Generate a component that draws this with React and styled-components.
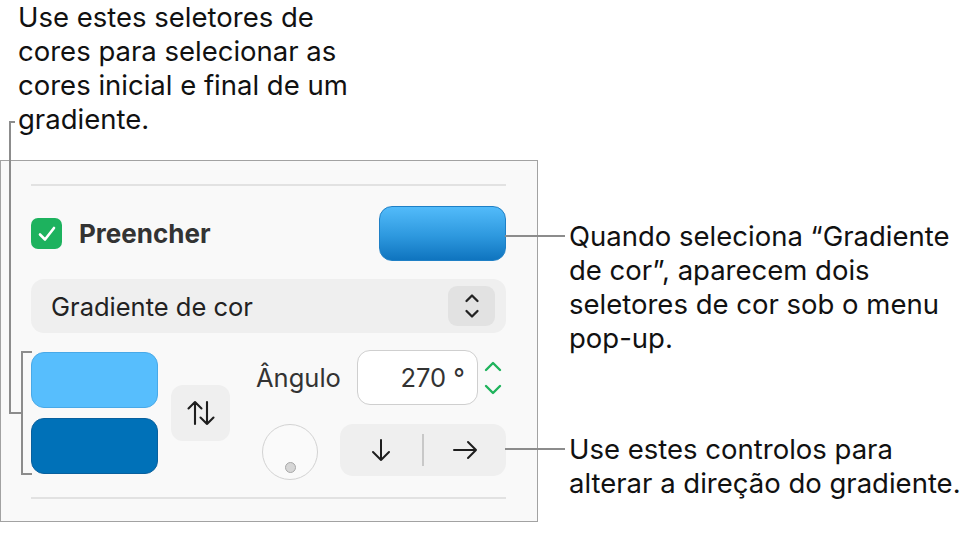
import styled, { createGlobalStyle } from "styled-components";

const GlobalStyle = createGlobalStyle`
  html, body {
    margin: 0;
    background: #ffffff;
  }
  body {
    font-family: Inter, "Noto Sans", "Liberation Sans", sans-serif;
    color: #111;
  }
`;

export default function App() {
  return (
    <>
      <GlobalStyle />
      <Page>
        <LeftCol>
          <Caption>
            Use estes seletores de
            <br />
            cores para selecionar as
            <br />
            cores inicial e final de um
            <br />
            gradiente.
          </Caption>

          <Panel>
            <Rule />

            <FillRow>
              <Check>
                <svg width="20" height="18" viewBox="0 0 20 18">
                  <path d="M3 9.5 L8 14.5 L17 3" fill="none" stroke="#fff" strokeWidth="2.6" strokeLinecap="round" strokeLinejoin="round" />
                </svg>
              </Check>
              <FillLabel>Preencher</FillLabel>
              <FillSwatch />
            </FillRow>

            <Select>
              <SelectText>Gradiente de cor</SelectText>
              <Stepper>
                <svg width="18" height="28" viewBox="0 0 18 28">
                  <path d="M3.5 9 L9 3.5 L14.5 9 M3.5 19 L9 24.5 L14.5 19" fill="none" stroke="#222" strokeWidth="2.3" strokeLinecap="round" strokeLinejoin="round" />
                </svg>
              </Stepper>
            </Select>

            <GradientGrid>
              <WellStack>
                <Well tone="light" />
                <Well tone="dark" />
              </WellStack>

              <SwapButton>
                <svg width="32" height="28" viewBox="0 0 32 28">
                  <path d="M10 25 V3 M3.5 9.5 L10 3 L16.5 9.5 M22 3 V25 M15.5 18.5 L22 25 L28.5 18.5" fill="none" stroke="#1e1e1e" strokeWidth="2.1" strokeLinecap="round" strokeLinejoin="round" />
                </svg>
              </SwapButton>

              <AngleArea>
                <AngleRow>
                  <AngleLabel>Ângulo</AngleLabel>
                  <AngleInput>270 °</AngleInput>
                  <GreenStepper>
                    <svg width="20" height="40" viewBox="0 0 20 40">
                      <path d="M3 12 L10 5 L17 12 M3 28 L10 35 L17 28" fill="none" stroke="#1fb35c" strokeWidth="2.4" strokeLinecap="round" strokeLinejoin="round" />
                    </svg>
                  </GreenStepper>
                </AngleRow>

                <DirRow>
                  <Dial>
                    <DialDot />
                  </Dial>
                  <DirGroup>
                    <DirButton>
                      <svg width="24" height="26" viewBox="0 0 24 26">
                        <path d="M12 3 V23 M4 15 L12 23 L20 15" fill="none" stroke="#1e1e1e" strokeWidth="2" strokeLinecap="round" strokeLinejoin="round" />
                      </svg>
                    </DirButton>
                    <DirDivider />
                    <DirButton>
                      <svg width="28" height="24" viewBox="0 0 28 24">
                        <path d="M3 12 H25 M17 4 L25 12 L17 20" fill="none" stroke="#1e1e1e" strokeWidth="2" strokeLinecap="round" strokeLinejoin="round" />
                      </svg>
                    </DirButton>
                  </DirGroup>
                </DirRow>
              </AngleArea>
            </GradientGrid>

            <Rule />
          </Panel>
        </LeftCol>

        <RightCol>
          <Callout offset={219}>
            Quando seleciona “Gradiente
            <br />
            de cor”, aparecem dois
            <br />
            seletores de cor sob o menu
            <br />
            pop-up.
          </Callout>
          <Callout offset={77}>
            Use estes controlos para
            <br />
            alterar a direção do gradiente.
          </Callout>
        </RightCol>

        {/* leader line from the caption to the bracket round the two wells */}
        <Leaders width="60" height="543" viewBox="0 0 60 543">
          <path d="M15 122 H10 V413 H22" />
          <path d="M32 352 H22 V474 H32" />
        </Leaders>
      </Page>
    </>
  );
}

const Page = styled.div`
  position: relative;
  width: 971px;
  height: 543px;
  display: grid;
  grid-template-columns: 538px 1fr;
  column-gap: 31px;
`;

const LeftCol = styled.div`
  display: flex;
  flex-direction: column;
  gap: 24px;
`;

const Caption = styled.div`
  padding-left: 18px;
  font-size: 27.5px;
  line-height: 34px;
  color: #111;
  white-space: nowrap;
`;

const Panel = styled.div`
  box-sizing: border-box;
  width: 538px;
  height: 362px;
  border: 1px solid #a2a2a2;
  background: #f9f9f9;
  padding: 23px 31px 0 30px;
  display: flex;
  flex-direction: column;
`;

const Rule = styled.div`
  height: 2px;
  background: #e2e2e2;
  &:last-child {
    margin-top: 23px;
  }
`;

const FillRow = styled.div`
  display: flex;
  align-items: center;
  margin-top: 20px;
  height: 55px;
`;

const Check = styled.div`
  width: 31px;
  height: 31px;
  border-radius: 7px;
  background: #1db25e;
  display: flex;
  align-items: center;
  justify-content: center;
  flex: none;
`;

const FillLabel = styled.div`
  margin-left: 17px;
  flex: 1;
  font-size: 26px;
  font-weight: 700;
  color: #333;
`;

const FillSwatch = styled.div`
  box-sizing: border-box;
  width: 127px;
  height: 55px;
  border-radius: 13px;
  border: 1px solid #1f80c6;
  background: linear-gradient(180deg, #52bbfa 0%, #2d98de 55%, #0f74bf 100%);
`;

const Select = styled.div`
  margin-top: 18px;
  height: 54px;
  border-radius: 13px;
  background: #efefef;
  display: flex;
  align-items: center;
  padding: 0 11px 0 20px;
`;

const SelectText = styled.div`
  flex: 1;
  font-size: 25.5px;
  color: #222;
`;

const Stepper = styled.div`
  width: 47px;
  height: 40px;
  border-radius: 9px;
  background: #e2e2e2;
  display: flex;
  align-items: center;
  justify-content: center;
`;

const GradientGrid = styled.div`
  margin-top: 19px;
  height: 122px;
  display: grid;
  grid-template-columns: 127px 59px 1fr;
  grid-template-rows: 122px;
  column-gap: 13px;
  align-items: center;
`;

const WellStack = styled.div`
  display: flex;
  flex-direction: column;
  gap: 10px;
`;

const Well = styled.div`
  box-sizing: border-box;
  height: 56px;
  border-radius: 13px;
  background: ${(p) => (p.tone === "light" ? "#57befd" : "#0071b8")};
  border: 1px solid ${(p) => (p.tone === "light" ? "#48a9e8" : "#08609e")};
`;

const SwapButton = styled.div`
  height: 56px;
  border-radius: 12px;
  background: #efefef;
  display: flex;
  align-items: center;
  justify-content: center;
`;

const AngleArea = styled.div`
  display: flex;
  flex-direction: column;
  gap: 19px;
  padding-left: 13px;
  margin-top: 4px;
`;

const AngleRow = styled.div`
  display: flex;
  align-items: center;
  height: 55px;
`;

const AngleLabel = styled.div`
  width: 101px;
  font-size: 25.5px;
  color: #333;
`;

const AngleInput = styled.div`
  box-sizing: border-box;
  width: 121px;
  height: 55px;
  border: 1.5px solid #cfcfcf;
  border-radius: 13px;
  background: #fff;
  display: flex;
  align-items: center;
  justify-content: flex-end;
  padding-right: 12px;
  font-size: 25.5px;
  color: #333;
`;

const GreenStepper = styled.div`
  margin-left: 5px;
  display: flex;
  align-items: center;
`;

const DirRow = styled.div`
  display: flex;
  align-items: flex-start;
  gap: 22px;
  padding-left: 6px;
`;

const Dial = styled.div`
  box-sizing: border-box;
  width: 56px;
  height: 56px;
  border-radius: 50%;
  border: 1.5px solid #d3d3d3;
  background: #fafafa;
  display: flex;
  align-items: flex-end;
  justify-content: center;
  padding-bottom: 6px;
`;

const DialDot = styled.div`
  box-sizing: border-box;
  width: 11px;
  height: 11px;
  border-radius: 50%;
  background: #d6d6d6;
  border: 1.5px solid #a8a8a8;
`;

const DirGroup = styled.div`
  flex: 1;
  height: 52px;
  border-radius: 13px;
  background: #efefef;
  display: flex;
  align-items: center;
`;

const DirButton = styled.div`
  flex: 1;
  display: flex;
  align-items: center;
  justify-content: center;
`;

const DirDivider = styled.div`
  width: 1.5px;
  height: 32px;
  background: #c8c8c8;
`;

const RightCol = styled.div`
  display: flex;
  flex-direction: column;
`;

const Callout = styled.div`
  position: relative;
  margin-top: ${(p) => p.offset}px;
  font-size: 27.5px;
  line-height: 34px;
  color: #111;
  white-space: nowrap;

  &::before {
    content: "";
    position: absolute;
    left: -64px;
    top: 16px;
    width: 60px;
    height: 2px;
    background: #8c8c8c;
  }
`;

const Leaders = styled.svg`
  position: absolute;
  left: 0;
  top: 0;
  pointer-events: none;
  fill: none;
  stroke: #8c8c8c;
  stroke-width: 2;
`;
